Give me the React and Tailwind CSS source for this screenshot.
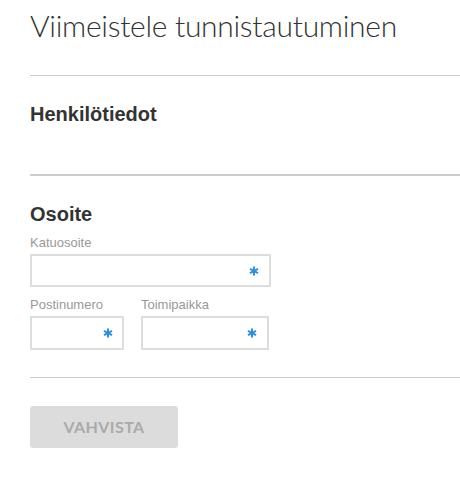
export default function App() {
  return (
    <div className="w-[460px] h-[481px] bg-white pl-[30px] font-['Liberation_Sans',Arial,sans-serif]">
      <h1 className="pt-[6px] text-[30px] leading-[38px] font-light text-[#333] font-['Lato',sans-serif] tracking-[-0.3px]">
        Viimeistele tunnistautuminen
      </h1>
      <div className="mt-[31px] h-px bg-[#ccc]" />
      <h2 className="mt-[26px] text-[20px] leading-[24px] font-bold text-[#333]">Henkilötiedot</h2>
      <div className="mt-[48px] h-[2px] bg-[#ccc]" />
      <h2 className="mt-[26px] text-[20px] leading-[24px] font-bold text-[#333]">Osoite</h2>
      <div className="mt-[9px] text-[13px] leading-[15px] text-[#999]">Katuosoite</div>
      <div className="mt-[4px] w-[241px] h-[33px] border-2 border-[#ddd] flex items-center justify-end pr-[10px]">
        <Star />
      </div>
      <div className="mt-[10px] flex gap-[17px]">
        <div>
          <div className="text-[13px] leading-[15px] text-[#999]">Postinumero</div>
          <div className="mt-[4px] w-[94px] h-[34px] border-2 border-[#ddd] flex items-center justify-end pr-[9px]">
            <Star />
          </div>
        </div>
        <div>
          <div className="text-[13px] leading-[15px] text-[#999]">Toimipaikka</div>
          <div className="mt-[4px] w-[128px] h-[34px] border-2 border-[#ddd] flex items-center justify-end pr-[10px]">
            <Star />
          </div>
        </div>
      </div>
      <div className="mt-[27px] h-px bg-[#ccc]" />
      <button className="mt-[28px] w-[148px] h-[42px] rounded-[3px] bg-[#dcdcdc] text-[#aaa] text-[16px] font-bold font-['Lato',sans-serif] tracking-[0.4px]">
        VAHVISTA
      </button>
    </div>
  );
}

function Star() {
  return (
    <svg width="10" height="10" viewBox="0 0 10 10" className="text-[#2b90e0]">
      <g stroke="currentColor" strokeWidth="2" strokeLinecap="butt">
        <line x1="5" y1="0.5" x2="5" y2="9.5" />
        <line x1="1" y1="2.8" x2="9" y2="7.2" />
        <line x1="1" y1="7.2" x2="9" y2="2.8" />
      </g>
    </svg>
  );
}
